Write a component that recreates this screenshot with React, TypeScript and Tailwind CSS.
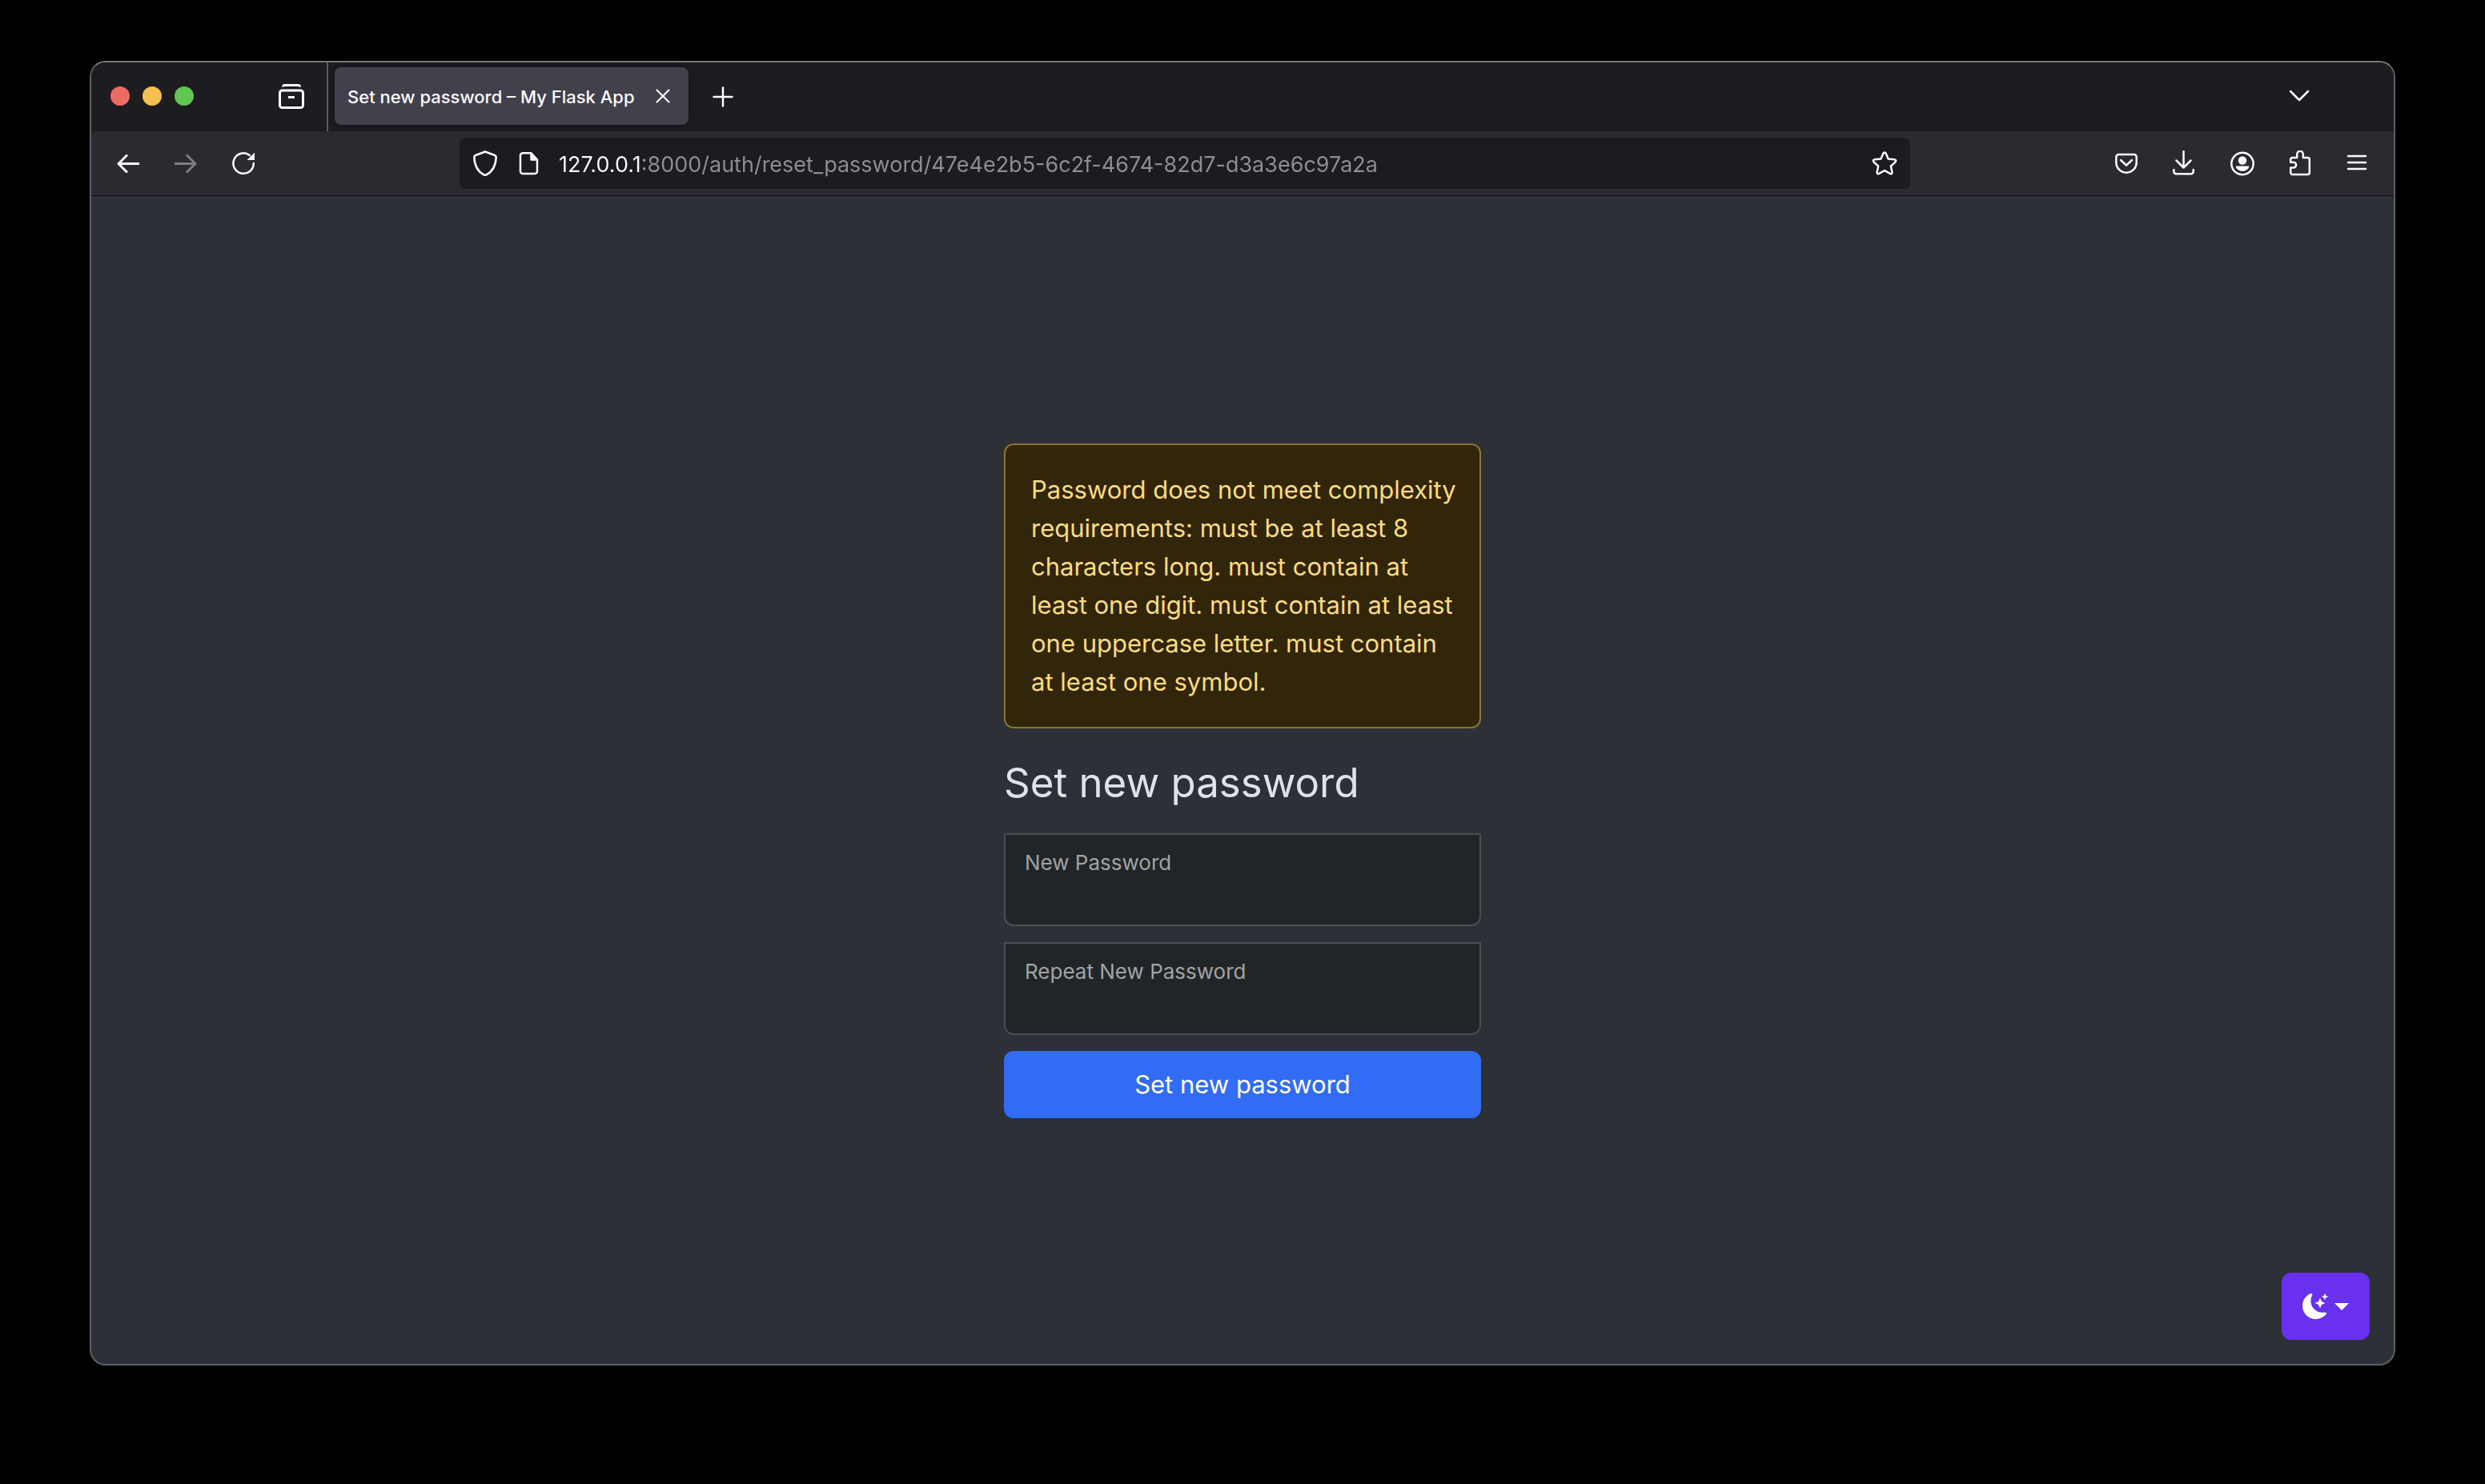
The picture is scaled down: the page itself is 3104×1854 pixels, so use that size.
import type { ReactNode } from "react";
import { BsMoonStarsFill } from "react-icons/bs";

function Icon({ children, className = "size-8" }: { children: ReactNode; className?: string }) {
  return (
    <svg
      viewBox="0 0 32 32"
      fill="none"
      stroke="currentColor"
      strokeWidth="2.5"
      strokeLinecap="round"
      strokeLinejoin="round"
      className={className}
      aria-hidden="true"
    >
      {children}
    </svg>
  );
}

function ToolButton({ label, disabled, children }: { label: string; disabled?: boolean; children: ReactNode }) {
  return (
    <button
      type="button"
      aria-label={label}
      disabled={disabled}
      className="flex h-16 w-[72px] shrink-0 items-center justify-center text-[#fbfbfe] disabled:text-[#7d7d81]"
    >
      <Icon>{children}</Icon>
    </button>
  );
}

function TabStrip() {
  return (
    <div className="flex h-[86px] bg-[#1d1c20]">
      <div className="flex w-[296px] shrink-0 items-center border-r-2 border-[#5b5a5e] pb-0.5 pl-6">
        <div className="flex gap-4">
          <button type="button" aria-label="Close window" className="size-6 rounded-full bg-[#ed6b60]" />
          <button type="button" aria-label="Minimize window" className="size-6 rounded-full bg-[#f5c050]" />
          <button type="button" aria-label="Zoom window" className="size-6 rounded-full bg-[#62c655]" />
        </div>
        <button type="button" aria-label="Firefox View" className="ml-auto mr-7 text-white">
          <Icon>
            <path d="M5.5 4.500c0-1.300.9-2 2-2h17c1.100 0 2 .7 2 2" strokeLinecap="butt" strokeWidth="3" />
            <rect x="1.500" y="9" width="29" height="21.500" rx="3" strokeWidth="3" />
            <path d="M12 17.500h8" strokeLinecap="butt" strokeWidth="3" />
          </Icon>
        </button>
      </div>
      <div className="flex flex-1 items-center pb-0.5 pl-2">
        <div className="flex h-[72px] items-center rounded-lg bg-[#42404b] pl-4 pr-4 shadow-[0_0_6px_#14121c]">
          <span className="w-[378px] whitespace-nowrap pt-0.5 text-[22px] font-medium leading-8 text-[#fbfbfe]">
            Set new password – My Flask App
          </span>
          <button type="button" aria-label="Close tab" className="text-white">
            <Icon>
              <path d="M8.500 8.500l15 15M23.500 8.500l-15 15" strokeWidth="2" />
            </Icon>
          </button>
        </div>
        <button type="button" aria-label="New tab" className="ml-[27px] text-white">
          <Icon>
            <path d="M16 5.500v23M4.500 17h23" />
          </Icon>
        </button>
        <button type="button" aria-label="List all tabs" className="ml-auto mr-[102px] text-white">
          <Icon>
            <path d="M5 10l11 11 11-11" />
          </Icon>
        </button>
      </div>
    </div>
  );
}

function Toolbar() {
  return (
    <div className="flex h-[81px] items-center border-b border-[#0c0c0d] bg-[#2b2a30] px-2.5">
      <ToolButton label="Back">
        <path d="M30 16.500H4M15 5.500L4 16.500 15 27.500" strokeLinecap="butt" strokeWidth="3" />
      </ToolButton>
      <ToolButton label="Forward" disabled>
        <path d="M2 16.500h26M17 5.500l11 11-11 11" strokeLinecap="butt" strokeWidth="3" />
      </ToolButton>
      <ToolButton label="Reload">
        <path d="M28.800 16a12.700 12.700 0 1 1-5-10" />
        <path d="M30 2.500v9.500h-9.500z" fill="currentColor" stroke="none" />
      </ToolButton>
      <div className="ml-[234px] mr-[234px] flex h-16 min-w-0 flex-1 items-center rounded-lg bg-[#1c1b20] pl-4 pr-4 text-[#fbfbfe]">
        <button type="button" aria-label="Tracking protection">
          <Icon>
            <path d="M16 1.500L28 6c1.200.5 1.800 1.300 1.700 2.600C29.200 18.500 26 26 17.500 30.300c-1 .5-2 .5-3 0C6 26 2.800 18.500 2.300 8.600 2.200 7.300 2.800 6.500 4 6z" />
          </Icon>
        </button>
        <button type="button" aria-label="Site information" className="ml-6">
          <Icon>
            <path d="M7 3.300h10l8 8.200V26a3 3 0 0 1-3 3H7a3 3 0 0 1-3-3V6.300a3 3 0 0 1 3-3z" />
            <path d="M17.500 3.300v8.200h7.500z" fill="currentColor" />
          </Icon>
        </button>
        <input
          type="text"
          aria-label="Address"
          defaultValue="127.0.0.1:8000/auth/reset_password/47e4e2b5-6c2f-4674-82d7-d3a3e6c97a2a"
          className="ml-5 h-12 min-w-0 flex-1 bg-[linear-gradient(90deg,#fbfbfe_104px,#8f8f93_104px)] bg-clip-text pt-0.5 text-[27px] text-transparent caret-white outline-none"
        />
        <button type="button" aria-label="Bookmark this page">
          <Icon>
            <path d="M16 2.500c.8 0 1.300.4 1.600 1.100l3 6.800 7.900.9c1.700.2 2.200 1.900 1 3l-5.600 5.200 1.500 7.600c.3 1.700-1 2.600-2.500 1.800L16 25l-6.900 3.900c-1.500.8-2.800-.1-2.500-1.800l1.500-7.600-5.600-5.200c-1.200-1.100-.7-2.800 1-3l7.900-.9 3-6.800c.3-.7.8-1.100 1.600-1.100z" />
          </Icon>
        </button>
      </div>
      <ToolButton label="Save to Pocket">
        <path d="M6.300 5h19.400a3 3 0 0 1 3 3v7a12.700 12.700 0 0 1-25.400 0V8a3 3 0 0 1 3-3z" />
        <path d="M9 12l7 6.500 7-6.500" />
      </ToolButton>
      <ToolButton label="Downloads">
        <path d="M15.500 1v20.500M6.500 12.500l9 9 9-9M3.300 24v2.200a3 3 0 0 0 3 3h18.400a3 3 0 0 0 3-3V24" />
      </ToolButton>
      <ToolButton label="Account">
        <circle cx="17" cy="16.500" r="13.700" />
        <circle cx="17" cy="12.500" r="5.200" fill="currentColor" stroke="none" />
        <path d="M8.500 19.500h17c-.8 4-4.500 6.300-8.500 6.300s-7.700-2.300-8.500-6.300z" fill="currentColor" stroke="none" />
      </ToolButton>
      <ToolButton label="Extensions">
        <path d="M7.500 9h5.700V4.500a3.800 3.800 0 0 1 7.600 0V9h5.500a2.500 2.500 0 0 1 2.500 2.500v16a2.500 2.500 0 0 1-2.500 2.500H7.500a2.300 2.300 0 0 1-2.300-2.300v-6.200h3.500a3.400 3.400 0 0 0 0-6.800H5.200v-3.400A2.300 2.300 0 0 1 7.500 9z" />
      </ToolButton>
      <ToolButton label="Application menu">
        <path d="M5 7h22M5 15h22M5 23h22" />
      </ToolButton>
    </div>
  );
}

function PasswordField({ id, label }: { id: string; label: string }) {
  return (
    <div className="relative">
      <input
        id={id}
        type="password"
        className="block h-[116px] w-full rounded-b-xl border-2 border-[#4b4f53] bg-[#212527] px-6 pt-12 pb-4 text-[31px] text-[#dee2e6] outline-none"
      />
      <label htmlFor={id} className="pointer-events-none absolute left-[26px] top-4 text-[26px] leading-[42px] text-[#a0a3a6]">
        {label}
      </label>
    </div>
  );
}

const alertLines = [
  "Password does not meet complexity",
  "requirements: must be at least 8",
  "characters long. must contain at",
  "least one digit. must contain at least",
  "one uppercase letter. must contain",
  "at least one symbol.",
];

export default function App() {
  return (
    <div className="flex min-h-screen flex-col bg-black px-28 pt-[76px] pb-[148px] font-['Inter',sans-serif]">
      <div className="flex flex-1 flex-col overflow-hidden rounded-[20px] border-2 border-[#5c5f63] border-t-[#77777a] bg-[#2d3037]">
        <TabStrip />
        <Toolbar />
        <main className="relative flex flex-1 items-center justify-center pt-0.5">
          <form className="w-[596px]" onSubmit={(e) => e.preventDefault()}>
            <div role="alert" className="rounded-xl border-2 border-[#8f742c] bg-[#32260a] p-8 text-[31px] leading-[48px] text-[#fadc83]">
              {alertLines.map((line) => (
                <span key={line} className="block whitespace-nowrap">
                  {line}
                </span>
              ))}
            </div>
            <h1 className="mt-[34px] mb-[30px] whitespace-nowrap text-[51px] leading-[67px] text-[#dfe2e6]">
              Set new password
            </h1>
            <div className="space-y-5">
              <PasswordField id="password" label="New Password" />
              <PasswordField id="repeat-password" label="Repeat New Password" />
              <button type="submit" className="block h-[84px] w-full rounded-xl bg-[#316cf4] text-[31px] text-white">
                Set new password
              </button>
            </div>
          </form>
          <button
            type="button"
            aria-label="Toggle theme"
            className="absolute right-[30px] bottom-[30px] flex h-[84px] w-[110px] items-center justify-center gap-2 rounded-xl bg-[#6930f0] text-white"
          >
            <BsMoonStarsFill className="size-8" />
            <svg viewBox="0 0 18 9" className="h-[9px] w-[18px]" aria-hidden="true">
              <path d="M0 0h18L9 9z" fill="currentColor" />
            </svg>
          </button>
        </main>
      </div>
    </div>
  );
}
